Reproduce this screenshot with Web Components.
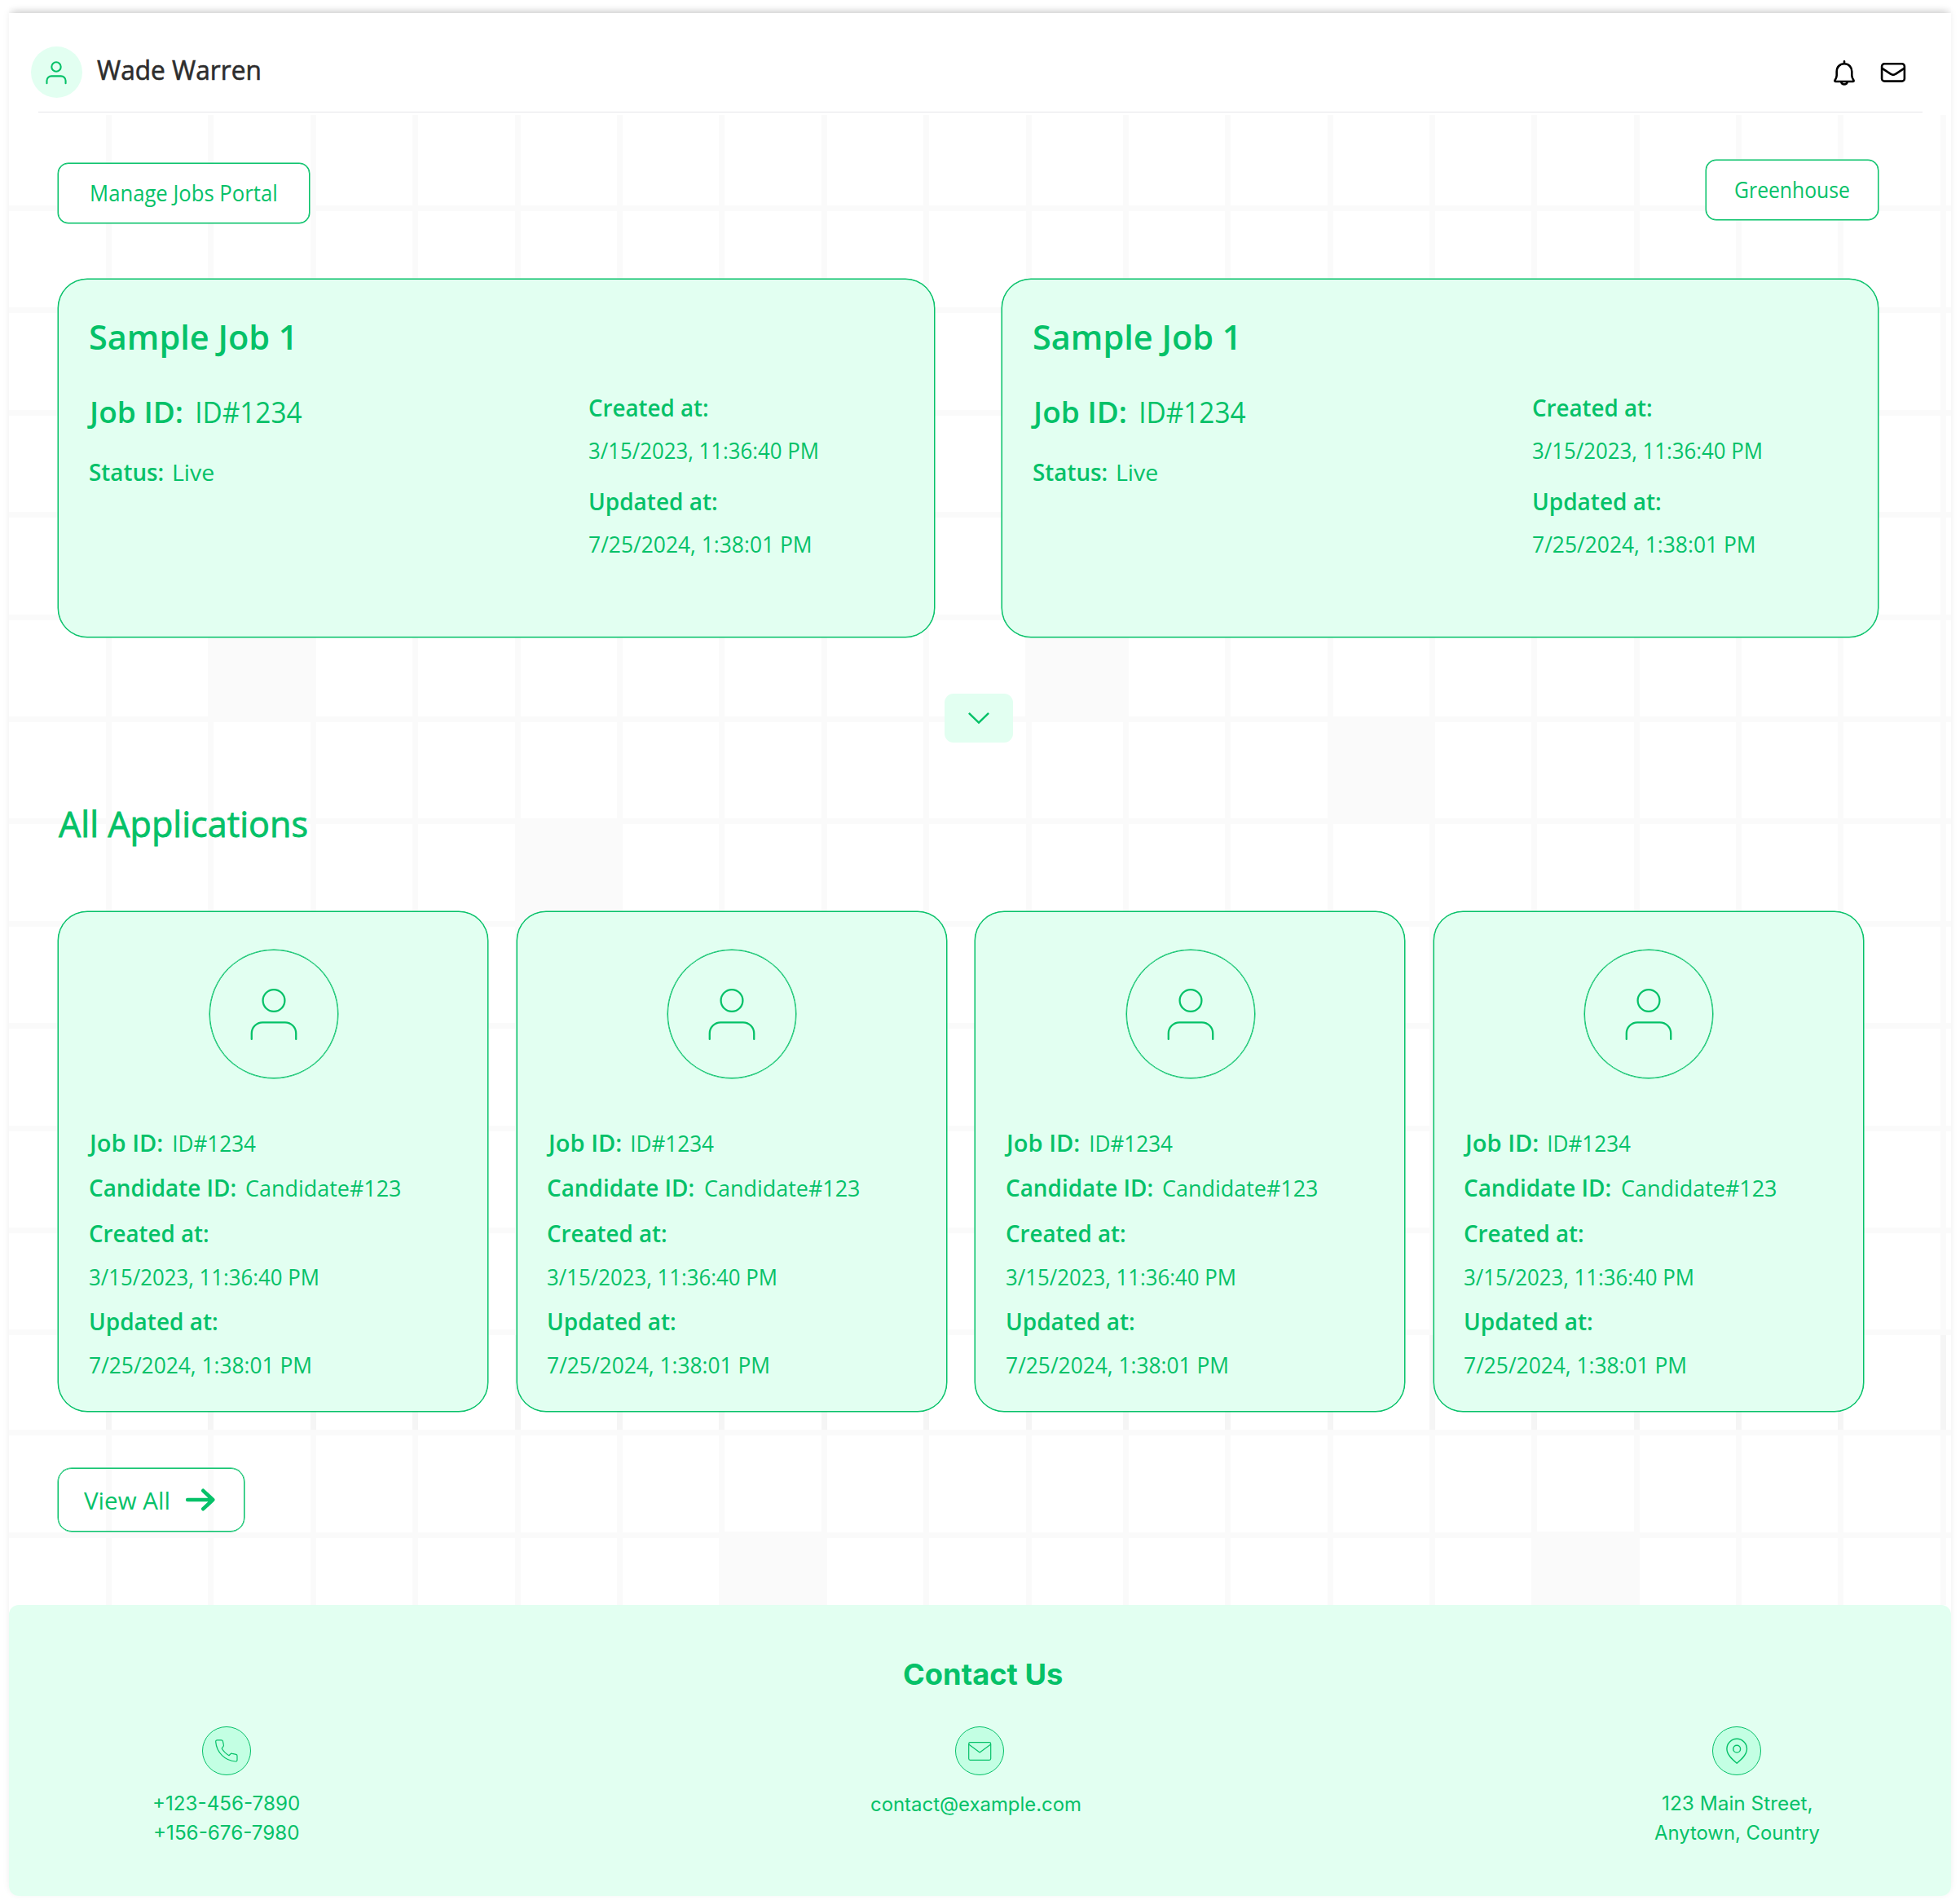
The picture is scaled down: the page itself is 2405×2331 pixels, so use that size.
<!DOCTYPE html>
<html lang="en">
<head>
<meta charset="utf-8">
<title>Manage Jobs Portal</title>
<style>
  html { background: #fff; }
  body {
    margin: 0;
    --green: #05c168;
    --mint: #e2fff1;
    --grid: #fafafa;
    color: var(--green);
    font-family: "Open Sans", "Noto Sans", sans-serif;
  }
</style>
</head>
<body>
<portal-page>
  <portal-header slot="header" name="Wade Warren"></portal-header>

  <portal-toolbar slot="main">
    <outline-button style="margin-top:4px;--w:309px;--h:74px;--pl:40px"><fit-text size="26.5" w="227" lh="72">Manage Jobs Portal</fit-text></outline-button>
    <outline-button style="--w:212px;--h:74px;--pl:35px"><fit-text size="26.5" w="140" lh="73">Greenhouse</fit-text></outline-button>
  </portal-toolbar>

  <job-card slot="jobs" heading="Sample Job 1" job="ID#1234" status="Live"></job-card>
  <job-card slot="jobs" heading="Sample Job 1" job="ID#1234" status="Live"></job-card>

  <fit-text slot="title" size="43" thick=".8" w="304.5" lh="60">All Applications</fit-text>

  <application-card slot="applications"></application-card>
  <application-card slot="applications"></application-card>
  <application-card slot="applications"></application-card>
  <application-card slot="applications"></application-card>

  <outline-button slot="more" style="--w:229px;--h:78px;--pl:31px;--r:17px;--bg:transparent">
    <fit-text size="29" w="103.5" lh="80" style="margin-top:2px">View All</fit-text>
    <ui-icon name="arrow" style="margin-left:20px;--s:38px"></ui-icon>
  </outline-button>

  <portal-footer slot="footer">
    <contact-item icon="phone" style="margin-left:178px;width:177px">
      <fit-text family="Inter" size="24" w="178" lh="36">+123-456-7890</fit-text>
      <fit-text family="Inter" size="24" w="176.5" lh="36" style="margin-left:1px">+156-676-7980</fit-text>
    </contact-item>
    <contact-item icon="envelope" style="margin-left:705px;width:261px">
      <fit-text family="Inter" size="24" w="257" lh="37" style="margin-right:8px">contact@example.com</fit-text>
    </contact-item>
    <contact-item icon="pin" style="margin-left:697.5px;width:203px">
      <fit-text family="Inter" size="24" w="182.5" lh="36">123 Main Street,</fit-text>
      <fit-text family="Inter" size="24" w="202.5" lh="36">Anytown, Country</fit-text>
    </contact-item>
  </portal-footer>
</portal-page>

<script>
const pen = document.createElement('canvas').getContext('2d');

/* One line of text, drawn so that its ink spans exactly the given width. */
class FitText extends HTMLElement {
  connectedCallback() {
    if (this.shadowRoot) return;
    const size = this.getAttribute('size') || 28;
    const weight = this.getAttribute('weight') || 400;
    const family = this.getAttribute('family') || 'Open Sans';
    const thick = this.getAttribute('thick') || 0;
    const w = parseFloat(this.getAttribute('w'));
    const lh = this.getAttribute('lh') || 40;
    pen.font = `${weight} ${size}px "${family}"`;
    const m = pen.measureText(this.textContent);
    const k = w / (m.actualBoundingBoxLeft + m.actualBoundingBoxRight);
    const root = this.attachShadow({ mode: 'open' });
    root.innerHTML = `<style>
      :host { display: block; flex: none; width: ${w}px; height: ${lh}px; }
      span { display: inline-block; white-space: nowrap; transform-origin: 0 50%;
        font: ${weight} ${size}px/${lh}px "${family}", sans-serif; -webkit-text-stroke: ${thick}px currentColor;
        transform: translateX(${(m.actualBoundingBoxLeft * k).toFixed(2)}px) scaleX(${k.toFixed(4)}); }
    </style><span><slot></slot></span>`;
  }
}

const ICONS = {
  user: ['0 0 64 64', '<circle cx="32" cy="16" r="13"/><path d="M5.600 62V55a13 13 0 0 1 13-13h26.800a13 13 0 0 1 13 13v7"/>'],
  bell: ['0 0 32 32', '<g stroke="#000" stroke-width="2.600"><path d="M16 1.200V4M16 4.300c-5.600 0-9.300 4-9.300 9.500v4.700c0 2.300-.8 3.800-1.900 5.600-.9 1.300-.5 1.900.7 1.900h21c1.200 0 1.600-.6.7-1.900-1.100-1.800-1.900-3.300-1.900-5.600v-4.700C25.300 8.300 21.600 4.300 16 4.300z"/><path d="M12.200 26.500a3.900 3.900 0 0 0 7.600 0"/></g>'],
  mail: ['0 0 32 32', '<g stroke="#000" stroke-width="2.600"><rect x="2.100" y="5.200" width="27.800" height="21.400" rx="3.200"/><path d="M2.500 10.800l10.600 7a5 5 0 0 0 5.800 0l10.600-7"/></g>'],
  chevron: ['0 0 26 14', '<path d="M.900.900L13 12.600 25.100.900" stroke-width="2.500" stroke-linecap="butt" stroke-linejoin="miter"/>'],
  arrow: ['0 0 38 38', '<path d="M3.200 19H34M22.300 7.800L34.200 19 22.300 30.200" stroke-width="4.600"/>'],
  phone: ['0 0 32 32', '<path stroke-width="1.200" d="M4.500 2.800h5c1 0 1.700.5 1.900 1.400l1 4.700c.2.800 0 1.400-.6 2L10.200 13c2 3.600 5.100 6.600 8.800 8.700l2-1.900c.5-.5 1.200-.7 1.900-.5l4.700 1c.9.200 1.400.9 1.400 1.800v5.100c0 1.200-.9 1.900-2 1.800C14.200 28.200 3.800 18.200 2.700 4.900c-.1-1.200.6-2.100 1.800-2.100z"/>'],
  envelope: ['0 0 32 32', '<g stroke-width="1.200"><rect x="2.700" y="5.700" width="27" height="21.600" rx="1.800"/><path d="M3 8.200l13.200 9.800L29.400 8.200"/></g>'],
  pin: ['0 0 32 32', '<g stroke-width="1.400"><path d="M16.200 31.300C10.600 26.500 3.900 20.700 3.900 13.600a12.300 12.300 0 0 1 24.600 0c0 7.100-6.700 12.900-12.300 17.700z"/><circle cx="16.200" cy="13.700" r="4.400"/></g>']
};
class UiIcon extends HTMLElement {
  connectedCallback() {
    if (this.shadowRoot) return;
    const [box, body] = ICONS[this.getAttribute('name')];
    this.attachShadow({ mode: 'open' }).innerHTML = `<style>
      :host { display: block; flex: none; width: var(--s, 32px); height: var(--sh, var(--s, 32px)); }
      svg { display: block; width: 100%; height: 100%; overflow: visible; fill: none;
        stroke: var(--green); stroke-width: var(--sw, 2); stroke-linecap: round; stroke-linejoin: round; }
    </style><svg viewBox="${box}">${body}</svg>`;
  }
}

class OutlineButton extends HTMLElement {
  connectedCallback() {
    if (this.shadowRoot) return;
    this.attachShadow({ mode: 'open' }).innerHTML = `<style>
      :host { display: flex; box-sizing: border-box; align-items: center; flex: none;
        width: var(--w); height: var(--h); padding-left: var(--pl);
        border: 1px solid var(--green); box-shadow: 0 0 0 .5px var(--green); border-radius: var(--r, 13px); background: var(--bg, #fff); }
    </style><slot></slot>`;
  }
}

class PortalHeader extends HTMLElement {
  connectedCallback() {
    if (this.shadowRoot) return;
    this.attachShadow({ mode: 'open' }).innerHTML = `<style>
      :host { display: block; height: 125px; background: #fff; box-shadow: 0 -5px 10px -4px rgba(0,0,0,.18); clip-path: inset(-16px 0 0 0); }
      .row { display: flex; align-items: center; height: 120px; margin: 0 35.500px; padding-top: 1px; border-bottom: 1px solid #e5e5e8; }
      .avatar { display: flex; justify-content: center; align-items: center; width: 63px; height: 63px; margin: 23px 0 0 -9px;
        border-radius: 50%; background: var(--mint); --s: 28px; --sw: 4.800; }
      fit-text { margin: 18px auto 0 18px; color: #2d2d2d; }
      .bell { margin: 25px 28px 0 0; }
      .mail { margin: 24px 19.500px 0 0; }
    </style>
    <div class="row"><div class="avatar"><ui-icon name="user"></ui-icon></div>
      <fit-text size="32.500" thick=".6" w="200">${this.getAttribute('name')}</fit-text>
      <ui-icon class="bell" name="bell"></ui-icon><ui-icon class="mail" name="mail"></ui-icon></div>`;
  }
}
class PortalToolbar extends HTMLElement {
  connectedCallback() {
    if (this.shadowRoot) return;
    this.attachShadow({ mode: 'open' }).innerHTML = `<style>
      :host { display: flex; justify-content: space-between; align-items: flex-start; height: 146px; }
    </style><slot></slot>`;
  }
}

class JobCard extends HTMLElement {
  connectedCallback() {
    if (this.shadowRoot) return;
    const a = n => this.getAttribute(n);
    this.attachShadow({ mode: 'open' }).innerHTML = `<style>
      :host { display: block; box-sizing: border-box; width: 1076px; height: 440px; padding: 40px 0 0 37.500px;
        border: 1px solid var(--green); box-shadow: 0 0 0 .5px var(--green); border-radius: 36px; background: var(--mint); }
      .cols { display: flex; margin-top: 37px; }
      .left { width: 613px; }
      .line { display: flex; }
    </style>
    <fit-text size="41" weight="600" w="247" lh="60" style="margin-left:1.500px">${a('heading')}</fit-text>
    <div class="cols">
      <div class="left">
        <div class="line" style="gap:18.500px;margin-top:1px"><fit-text size="36" weight="600" w="116" lh="50" style="margin-left:-2.500px">Job ID:</fit-text><fit-text size="36" w="128" lh="50">${a('job')}</fit-text></div>
        <div class="line" style="gap:14px;margin-top:28px"><fit-text weight="600" w="89.500">Status:</fit-text><fit-text w="49.500">${a('status')}</fit-text></div>
      </div>
      <div>
        <fit-text weight="600" w="145">Created at:</fit-text>
        <fit-text w="280" style="margin-top:12px">3/15/2023, 11:36:40 PM</fit-text>
        <fit-text weight="600" w="155" style="margin:23px 0 0 1px">Updated at:</fit-text>
        <fit-text w="271.500" style="margin-top:12px">7/25/2024, 1:38:01 PM</fit-text>
      </div>
    </div>`;
  }
}

class ApplicationCard extends HTMLElement {
  connectedCallback() {
    if (this.shadowRoot) return;
    this.attachShadow({ mode: 'open' }).innerHTML = `<style>
      :host { display: block; box-sizing: border-box; width: 528px; height: 614px; padding: 45.500px 0 0 37.500px;
        border: 1px solid var(--green); box-shadow: 0 0 0 .5px var(--green); border-radius: 36px; background: var(--mint); }
      .photo { display: flex; box-sizing: border-box; justify-content: center; align-items: center; width: 158px; height: 158px;
        margin: 0 0 59px 147px; border: 1px solid var(--green); box-shadow: 0 0 0 .5px var(--green); border-radius: 50%; --s: 66px; --sw: 2.200; }
      .line { display: flex; gap: 14px; margin-bottom: 15.500px; }
    </style>
    <div class="photo"><ui-icon name="user"></ui-icon></div>
    <div class="line"><fit-text weight="600" w="91.500" style="margin-left:-2.500px">Job ID:</fit-text><fit-text w="101">ID#1234</fit-text></div>
    <div class="line"><fit-text weight="600" w="178.500">Candidate ID:</fit-text><fit-text w="189.500">Candidate#123</fit-text></div>
    <fit-text weight="600" w="145" style="margin-top:16px">Created at:</fit-text>
    <fit-text w="280" style="margin-top:12.500px">3/15/2023, 11:36:40 PM</fit-text>
    <fit-text weight="600" w="155" style="margin:15.500px 0 0 1px">Updated at:</fit-text>
    <fit-text w="271" style="margin-top:12.500px">7/25/2024, 1:38:01 PM</fit-text>`;
  }
}

class ContactItem extends HTMLElement {
  connectedCallback() {
    if (this.shadowRoot) return;
    this.attachShadow({ mode: 'open' }).innerHTML = `<style>
      :host { display: flex; flex: none; flex-direction: column; align-items: center; }
      .badge { display: flex; box-sizing: border-box; justify-content: center; align-items: center; width: 60px; height: 60px;
        margin-bottom: 17px; border: 1px solid var(--green); border-radius: 50%; background: #c3ffe3; }
    </style><div class="badge"><ui-icon name="${this.getAttribute('icon')}"></ui-icon></div><slot></slot>`;
  }
}

class PortalFooter extends HTMLElement {
  connectedCallback() {
    if (this.shadowRoot) return;
    this.attachShadow({ mode: 'open' }).innerHTML = `<style>
      :host { display: block; box-sizing: border-box; height: 357px; padding-top: 61px; border-radius: 12px; background: var(--mint); }
      .title { margin: 0 0 38px 1098px; }
      .row { display: flex; align-items: flex-start; }
    </style>
    <fit-text class="title" family="Inter" size="35.500" weight="700" w="194.500" lh="50">Contact Us</fit-text>
    <div class="row"><slot></slot></div>`;
  }
}

class PortalPage extends HTMLElement {
  connectedCallback() {
    if (this.shadowRoot) return;
    const lines = (dir, step, color = 'var(--grid)') => `repeating-linear-gradient(${dir}, ${color} 0 7px, transparent 7px ${step}px)`;
    const cell = (x, y, w, h) => `linear-gradient(var(--grid), var(--grid)) ${x}px ${y}px / ${w}px ${h}px no-repeat`;
    const layers = [
      `${lines('90deg', 125.4, '#f5f5f5')} 118.500px 1497px / 1136px 116px no-repeat`,
      `${lines('90deg', 125.33, '#f5f5f5')} 1367px 1497px / 1016px 116px no-repeat`,
      cell(244.5, 613, 132, 131), cell(1247, 613, 127, 131), cell(1618, 738, 132, 132),
      cell(620.5, 863, 132, 131), cell(872, 1738, 132, 100), cell(1869, 1738, 132, 100),
      `${lines('90deg', 125.4)} 118.500px 0 / 1136px 100% no-repeat`,
      `${lines('90deg', 125.33)} 1367px 0 / 1016px 100% no-repeat`,
      `${lines('180deg', 125.4)} 0 111px / 100% 1386px no-repeat`,
      `${lines('180deg', 125.8)} 0 1613px / 100% 140px no-repeat`
    ];
    this.attachShadow({ mode: 'open' }).innerHTML = `<style>
      :host { display: block; box-sizing: border-box; width: 2405px; height: 2331px; padding: 16px 11px 0; overflow: hidden; }
      .frame { box-shadow: 0 -2px 8px rgba(0,0,0,.07); height: 2310px; border-radius: 0 0 12px 12px; }
      main { display: block; box-sizing: border-box; height: 1828px; padding: 55px 89px 0 60px; background: ${layers.join(', ')}; }
      .jobs { display: flex; justify-content: space-between; }
      .toggle { display: flex; justify-content: center; align-items: center; width: 84px; height: 60px; margin: 69px 0 0 1088px;
        border-radius: 11px; background: var(--mint); --s: 26px; --sh: 14px; }
      .title { display: block; margin: 69.500px 0 0 .5px; height: 60px; }
      .apps { display: flex; gap: 34.500px; margin-top: 77.500px; }
      .more { display: block; margin-top: 69px; }
    </style>
    <div class="frame">
      <slot name="header"></slot>
      <main>
        <slot name="main"></slot>
        <div class="jobs"><slot name="jobs"></slot></div>
        <div class="toggle"><ui-icon name="chevron"></ui-icon></div>
        <div class="title"><slot name="title"></slot></div>
        <div class="apps"><slot name="applications"></slot></div>
        <div class="more"><slot name="more"></slot></div>
      </main>
      <slot name="footer"></slot>
    </div>`;
  }
}

customElements.define('fit-text', FitText);
customElements.define('ui-icon', UiIcon);
customElements.define('outline-button', OutlineButton);
customElements.define('portal-header', PortalHeader);
customElements.define('portal-toolbar', PortalToolbar);
customElements.define('job-card', JobCard);
customElements.define('application-card', ApplicationCard);
customElements.define('contact-item', ContactItem);
customElements.define('portal-footer', PortalFooter);
customElements.define('portal-page', PortalPage);
</script>
</body>
</html>
